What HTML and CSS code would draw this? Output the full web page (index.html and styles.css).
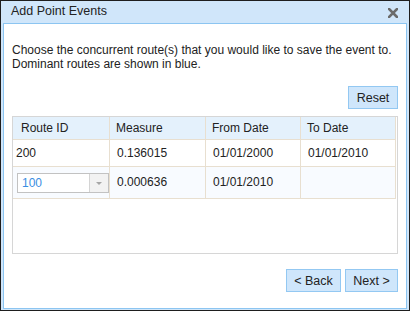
FILE: index.html
```html
<!DOCTYPE html>
<html lang="en">
<head>
    <meta charset="UTF-8">
    <title>Add Point Events</title>
    <link rel="stylesheet" href="styles.css">
</head>
<body>
<div class="dialog">
    <div class="dialog-title">
        <span class="title-text">Add Point Events</span>
        <svg class="close" width="10" height="10" viewBox="0 0 10 10">
            <path d="M1 1 L9 9 M9 1 L1 9" stroke="#6b6b6b" stroke-width="2.6" stroke-linecap="square"/>
        </svg>
    </div>
    <div class="dialog-body">
        <p class="intro">Choose the concurrent route(s) that you would like to save the event to.<br>Dominant routes are shown in blue.</p>
        <div class="toolbar">
            <button class="btn btn-reset">Reset</button>
        </div>
        <div class="grid">
            <div class="grid-row grid-head">
                <div class="cell">Route ID</div>
                <div class="cell">Measure</div>
                <div class="cell">From Date</div>
                <div class="cell">To Date</div>
            </div>
            <div class="grid-row row-1">
                <div class="cell">200</div>
                <div class="cell">0.136015</div>
                <div class="cell">01/01/2000</div>
                <div class="cell">01/01/2010</div>
            </div>
            <div class="grid-row row-2">
                <div class="cell">
                    <div class="select">
                        <span class="select-value">100</span>
                        <span class="select-arrow"></span>
                    </div>
                </div>
                <div class="cell">0.000636</div>
                <div class="cell">01/01/2010</div>
                <div class="cell"></div>
            </div>
        </div>
        <div class="footer">
            <button class="btn btn-back">&lt; Back</button>
            <button class="btn btn-next">Next &gt;</button>
        </div>
    </div>
</div>
</body>
</html>
```

FILE: styles.css
```css
* {
    margin: 0;
    padding: 0;
    box-sizing: border-box;
}

body {
    font-family: "Liberation Sans", Arial, sans-serif;
    font-size: 12px;
    color: #222;
}

.dialog {
    width: 410px;
    height: 311px;
    border: 1px solid #1e1e1e;
    background: #d0e6fa;
    padding: 0 2px 1px;
    display: flex;
    flex-direction: column;
}

.dialog-title {
    height: 22px;
    display: flex;
    align-items: center;
    justify-content: space-between;
    padding: 0 9px 3px 8px;
    font-size: 12.5px;
}

.close {
    display: block;
    margin-top: 5px;
}

.dialog-body {
    flex: 1;
    background: #fff;
    border: 1px solid #8cc5f1;
    padding: 19px 8px 0;
}

.intro {
    line-height: 14px;
    white-space: nowrap;
}

.toolbar {
    display: flex;
    justify-content: flex-end;
    margin-top: 15px;
}

.btn {
    height: 23px;
    font-family: "Liberation Sans", Arial, sans-serif;
    font-size: 12.5px;
    color: #222;
    background: #cfe6fb;
    border: 1px solid #93c8f2;
}

.btn-reset {
    width: 50px;
}

.grid {
    margin-top: 7px;
    height: 138px;
    border: 1px solid #d6d6d6;
}

.grid-row {
    display: grid;
    grid-template-columns: 97px 96px 95px 95px;
}

.cell {
    border-right: 1px solid #e8dfd0;
    border-bottom: 1px solid #e8dfd0;
    padding-left: 7px;
    white-space: nowrap;
}

.grid-head .cell {
    height: 23px;
    line-height: 22px;
    background: #e4f1fc;
    padding-left: 6px;
}

.grid-head .cell:first-child {
    padding-left: 8px;
}

.row-1 .cell {
    height: 27px;
    line-height: 26px;
}

.row-1 .cell:first-child {
    padding-left: 3px;
}

.row-2 .cell {
    height: 32px;
    line-height: 31px;
    background: #f8fbff;
}

.row-2 .cell:first-child {
    padding-left: 4px;
    display: flex;
    align-items: center;
}

.select {
    width: 93px;
    height: 20px;
    border: 1px solid #c2c2c2;
    background: #fff;
    display: flex;
}

.select-value {
    flex: 1;
    line-height: 18px;
    padding-left: 4px;
    color: #3a8ee2;
}

.select-arrow {
    width: 19px;
    border-left: 1px solid #d4d4d4;
    background: #f2f2f2;
    position: relative;
}

.select-arrow::after {
    content: "";
    position: absolute;
    left: 6px;
    top: 8px;
    border-left: 3px solid transparent;
    border-right: 3px solid transparent;
    border-top: 3px solid #a6a6a6;
}

.footer {
    display: flex;
    justify-content: flex-end;
    gap: 4px;
    margin-top: 15px;
}

.btn-back {
    width: 55px;
}

.btn-next {
    width: 53px;
}
```
